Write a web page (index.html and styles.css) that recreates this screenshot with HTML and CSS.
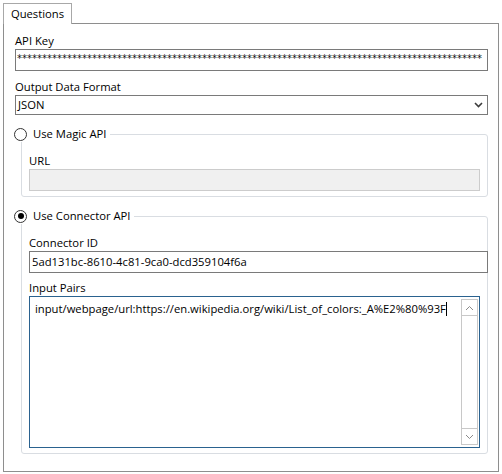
FILE: index.html
```html
<!DOCTYPE html>
<html>
<head>
<meta charset="utf-8">
<link rel="stylesheet" href="styles.css">
</head>
<body>
<div class="window">
  <div class="tabs">
    <div class="tab">Questions</div>
  </div>
  <div class="panel">
    <div class="label">API Key</div>
    <div class="input password"><span class="stars">*********************************************************************************************</span></div>

    <div class="label gap">Output Data Format</div>
    <div class="select">
      <span>JSON</span>
      <svg class="chev" width="9" height="6" viewBox="0 0 9 6"><polyline points="1,1 4.5,4.5 8,1" fill="none" stroke="#3c3c3c" stroke-width="1.6"/></svg>
    </div>

    <fieldset class="group">
      <legend class="legend"><span class="radio"></span><span>Use Magic API</span></legend>
      <div class="group-body">
        <div class="label">URL</div>
        <div class="input disabled"></div>
      </div>
    </fieldset>

    <fieldset class="group tall">
      <legend class="legend"><span class="radio checked"></span><span>Use Connector API</span></legend>
      <div class="group-body">
        <div class="label">Connector ID</div>
        <div class="input wide">5ad131bc-8610-4c81-9ca0-dcd359104f6a</div>
        <div class="label gap2">Input Pairs</div>
        <div class="textarea">
          <div class="ta-text">input/webpage/url:https://en.wikipedia.org/wiki/List_of_colors:_A%E2%80%93F<span class="caret"></span></div>
          <div class="scrollbar">
            <div class="sb-btn up"><svg width="9" height="6" viewBox="0 0 9 6"><polyline points="1,5 4.5,1.5 8,5" fill="none" stroke="#8a8a8a" stroke-width="1"/></svg></div>
            <div class="sb-track"></div>
            <div class="sb-btn down"><svg width="9" height="6" viewBox="0 0 9 6"><polyline points="1,1 4.5,4.5 8,1" fill="none" stroke="#8a8a8a" stroke-width="1"/></svg></div>
          </div>
        </div>
      </div>
    </fieldset>
  </div>
</div>
</body>
</html>
```

FILE: styles.css
```css
html, body {
  margin: 0;
  padding: 0;
  background: #ffffff;
}
body {
  font-family: "Open Sans", "Noto Sans", sans-serif;
  font-size: 11.25px;
  color: #000;
}
.window {
  padding: 3px 0 0 3px;
  width: 499px;
}
.tabs {
  display: flex;
  position: relative;
  z-index: 1;
}
.tab {
  width: 67px;
  height: 20px;
  border: 1px solid #a8a8a8;
  border-bottom: none;
  background: #fff;
  margin-bottom: -1px;
  display: flex;
  align-items: center;
  justify-content: center;
  line-height: 16px;
  box-sizing: content-box;
}
.panel {
  width: 473px;
  height: 438px;
  border: 1px solid #8e8e8e;
  padding: 9px 10px 0 11px;
  display: flex;
  flex-direction: column;
}
.label {
  line-height: 16px;
  height: 16px;
}
.label.gap {
  margin-top: 8px;
}
.label.gap2 {
  margin-top: 7px;
}
.input {
  height: 20px;
  border: 1px solid #7a7a7a;
  line-height: 20px;
  padding-left: 2px;
  overflow: hidden;
  white-space: nowrap;
}
.input.password {
  padding-left: 1px;
  line-height: 16px;
}
.stars {
  font-family: "DejaVu Sans", sans-serif;
  font-size: 10px;
  letter-spacing: 0;
  color: #111;
}
.input.disabled {
  background: #f0f0f0;
  border-color: #cccccc;
}
.input.wide {
  margin-right: -8px;
}
.select {
  height: 18px;
  border: 1px solid #7a7a7a;
  display: flex;
  align-items: center;
  justify-content: space-between;
  padding: 0 4px 0 2px;
  line-height: 18px;
}
.chev {
  display: block;
}
.group {
  margin: 11px 0 0 6px;
  padding: 0;
  border: 1px solid #d9dde2;
  border-radius: 3px;
  min-width: 0;
}
.legend {
  display: flex;
  align-items: center;
  padding: 0 4px 0 0;
  margin-left: -8px;
  line-height: 16px;
  height: 16px;
  background: #fff;
}
.radio {
  width: 11px;
  height: 11px;
  border: 1px solid #333;
  border-radius: 50%;
  margin-right: 6px;
  display: flex;
  align-items: center;
  justify-content: center;
  background: #fff;
}
.radio.checked::after {
  content: "";
  width: 6px;
  height: 6px;
  border-radius: 50%;
  background: #000;
}
.group-body {
  padding: 11px 7px 5px 7px;
}
.textarea {
  height: 150px;
  border: 1px solid #2a628f;
  display: flex;
  justify-content: space-between;
}
.ta-text {
  flex: 1;
  min-width: 0;
  overflow: hidden;
  padding: 4px 0 0 5px;
  line-height: 16px;
  white-space: nowrap;
}
.caret {
  display: inline-block;
  width: 1px;
  height: 14px;
  background: #000;
  vertical-align: -3px;
}
.scrollbar {
  flex: 0 0 15px;
  width: 15px;
  margin: 2px 1px 2px 0;
  border: 1px solid #c8c8c8;
  display: flex;
  flex-direction: column;
}
.sb-btn {
  height: 15px;
  display: flex;
  align-items: center;
  justify-content: center;
}
.sb-btn.up {
  border-bottom: 1px solid #c8c8c8;
}
.sb-btn.down {
  border-top: 1px solid #c8c8c8;
}
.sb-track {
  flex: 1;
}
```
